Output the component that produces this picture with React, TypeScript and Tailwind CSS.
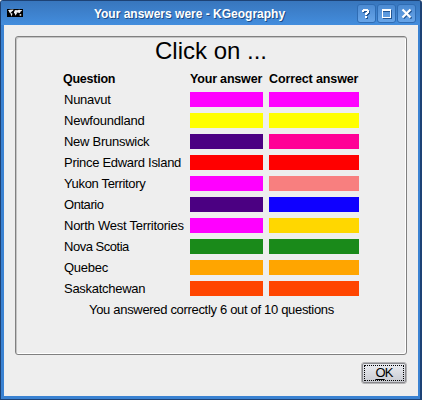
import React from "react";

type Row = { name: string; track: string; given: string; correct: string };

const rows: Row[] = [
  { name: "Nunavut", track: "tracking-[-0.25px]", given: "bg-[#ff00ff]", correct: "bg-[#ff00ff]" },
  { name: "Newfoundland", track: "tracking-[-0.22px]", given: "bg-[#ffff00]", correct: "bg-[#ffff00]" },
  { name: "New Brunswick", track: "tracking-[-0.27px]", given: "bg-[#4b0082]", correct: "bg-[#ff0096]" },
  { name: "Prince Edward Island", track: "tracking-[-0.29px]", given: "bg-[#ff0000]", correct: "bg-[#ff0000]" },
  { name: "Yukon Territory", track: "tracking-[-0.34px]", given: "bg-[#ff00ff]", correct: "bg-[#f87f7f]" },
  { name: "Ontario", track: "tracking-[-0.45px]", given: "bg-[#4b0082]", correct: "bg-[#0f00ff]" },
  { name: "North West Territories", track: "tracking-[-0.25px]", given: "bg-[#ff00ff]", correct: "bg-[#ffd700]" },
  { name: "Nova Scotia", track: "tracking-[-0.48px]", given: "bg-[#1a8a1a]", correct: "bg-[#1a8a1a]" },
  { name: "Quebec", track: "tracking-[-0.25px]", given: "bg-[#ffa500]", correct: "bg-[#ffa500]" },
  { name: "Saskatchewan", track: "tracking-[-0.28px]", given: "bg-[#ff4500]", correct: "bg-[#ff4500]" },
];

function TitleButton({ children, label }: { children: React.ReactNode; label: string }) {
  return (
    <button
      aria-label={label}
      className="flex h-[19px] w-[19px] items-center justify-center rounded-[3px] border border-[#2f6cb3] bg-linear-to-b from-[#4b8ad2] to-[#68a5e8]"
    >
      <svg width="11" height="11" viewBox="0 0 11 11" fill="none" shapeRendering="crispEdges">
        {children}
      </svg>
    </button>
  );
}

const questionMark = "M2 1h5v1h1v3h-1v1h-1v1h-2v-2h1v-1h1v-1h-3v1h-2v-2h1zM4 8h2v2h-2z";

function MapIcon() {
  return (
    <svg width="16" height="8" viewBox="0 0 16 8">
      <rect width="16" height="8" fill="#000" />
      <path
        d="M0.800 1.200L3 0.800L6.500 0.600L6 1.700L5 2.200L4.300 3.200L3.400 3.500L4.500 4.200L5.600 4.800L5 6L4.300 7.400L3.900 6L3.600 4.600L2.400 3.500L1.800 2.100ZM7.200 2.700L7.400 1.800L8.500 1L10.500 1.200L12 0.700L15.300 1.300L14.700 2L13.700 2.200L13.400 3.300L12.400 4.200L11.600 3.500L11 4.300L10.300 3.200L9.700 3.500L10 4.300L9.300 5.200L8.800 6.500L8.200 6L8 4.600L6.900 4.200L7 3.200ZM12.500 5.600L13.700 5L14.600 6.100L13.800 6.700L12.600 6.400Z"
        fill="#f4f4f4"
      />
    </svg>
  );
}

export default function App() {
  const heading = "h-[15px] text-[12.5px] leading-[17px] font-bold whitespace-nowrap";
  return (
    <div className="flex h-[400px] w-[422px] flex-col overflow-hidden rounded-t-[3px] border-y border-l border-r-2 border-[#1d4275] bg-[#3a82d2] font-['Liberation_Sans',Arial,sans-serif] text-[13px] text-black">
      <header className="flex h-6 shrink-0 items-center bg-linear-to-b from-[#3876bd] to-[#438ddd] pr-[4px] pl-1.5">
        <MapIcon />
        <h1 className="flex-1 pt-[1px] pr-[1px] text-center text-[12px] leading-[24px] font-bold whitespace-nowrap text-white [text-shadow:1px_1px_0_#1e4c85]">
          Your answers were - KGeography
        </h1>
        <div className="flex gap-px self-start pt-[3px]">
          <TitleButton label="Help">
            <path d={questionMark} transform="translate(1 1)" fill="#235694" />
            <path d={questionMark} fill="#fff" />
          </TitleButton>
          <TitleButton label="Maximize">
            <path d="M2 10.500h8.500v-8.500M2 3.500h7" stroke="#235694" />
            <path d="M1 1h9v9h-9zM2 3v6h7v-6z" fill="#fff" fillRule="evenodd" />
          </TitleButton>
          <TitleButton label="Close">
            <path d="M2.500 2.500l8 8M10.500 2.500l-8 8" stroke="#235694" strokeWidth="2" shapeRendering="auto" />
            <path d="M1.500 1.500l8 8M9.500 1.500l-8 8" stroke="#fff" strokeWidth="2.200" shapeRendering="auto" />
          </TitleButton>
        </div>
      </header>
      <main className="mr-[2px] mb-[3px] ml-[3px] flex flex-1 flex-col items-end bg-[#eeeeee] pt-[11px] pr-[11px] pl-[11px]">
        <section className="flex h-[319px] w-[392px] flex-col rounded-[3px] border border-[#808080] shadow-[inset_1px_1px_0_#c4c4c4,inset_-1px_-1px_0_#fff]">
          <h2 className="mb-[1px] h-[28px] text-center text-[24px] leading-[28px]">Click on ...</h2>
          <div className="ml-[48px] grid w-[295px] grid-cols-[120px_73px_90px] gap-[6px] pt-[5px]">
            <div className={`${heading} -ml-px tracking-[-0.25px]`}>Question</div>
            <div className={`${heading} tracking-[-0.18px]`}>Your answer</div>
            <div className={`${heading} tracking-[-0.12px]`}>Correct answer</div>
            {rows.map((r) => (
              <React.Fragment key={r.name}>
                <div className={`h-[15px] leading-[15px] whitespace-nowrap ${r.track}`}>{r.name}</div>
                <div className={`h-[15px] ${r.given}`} />
                <div className={`h-[15px] ${r.correct}`} />
              </React.Fragment>
            ))}
          </div>
          <p className="mt-[6px] pl-[1px] text-center leading-[15px] tracking-[-0.32px] whitespace-nowrap">
            You answered correctly 6 out of 10 questions
          </p>
        </section>
        <button className="mt-[7px] h-[22px] w-[46px] rounded-[3px] border border-[#b4b4b6]">
          <span className="flex h-full w-full rounded-[2px] border border-[#88888c] bg-linear-to-b from-[#eaecf1] to-[#c9cbd1] p-[1px]">
            <span className="flex h-full w-full items-center justify-center border border-dotted border-black tracking-[-0.8px]">
              <span>
                <span className="underline underline-offset-2">O</span>K
              </span>
            </span>
          </span>
        </button>
      </main>
    </div>
  );
}
